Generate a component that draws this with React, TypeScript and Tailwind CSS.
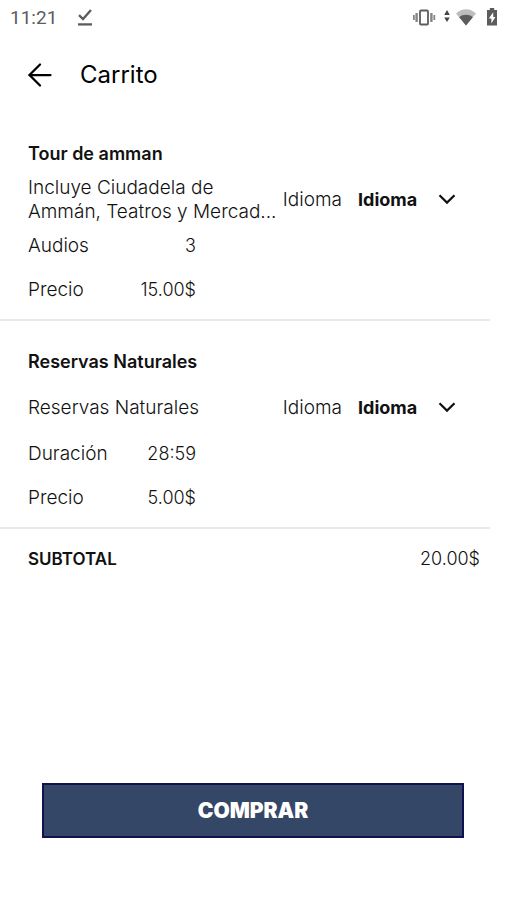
import { ArrowLeft } from 'lucide-react';

type CartItem = {
  id: string;
  title: string;
  description: string;
  details: { label: string; value: string }[];
};

const items: CartItem[] = [
  {
    id: 'amman',
    title: 'Tour de amman',
    description: 'Incluye Ciudadela de Ammán, Teatros y Mercad...',
    details: [
      { label: 'Audios', value: '3' },
      { label: 'Precio', value: '15.00$' },
    ],
  },
  {
    id: 'reservas',
    title: 'Reservas Naturales',
    description: 'Reservas Naturales',
    details: [
      { label: 'Duración', value: '28:59' },
      { label: 'Precio', value: '5.00$' },
    ],
  },
];

function StatusBar() {
  return (
    <div className="flex h-9 items-center pl-[10px] pr-2 text-[#5c5c5c]">
      <span className="font-['Roboto',sans-serif] text-[19px] font-normal leading-6">11:21</span>
      <svg className="ml-5 h-5 w-4" viewBox="0 0 16 20" fill="none" stroke="currentColor" strokeWidth="2.3">
        <path d="M2 7.2 6 11 14 2" />
        <path d="M1 16.4h14" />
      </svg>

      <div className="ml-auto flex items-center">
        {/* Vibrate */}
        <svg className="h-5 w-6" viewBox="0 0 24 20" fill="none" stroke="currentColor">
          <rect x="7" y="2.5" width="8" height="14" rx="1" strokeWidth="1.8" />
          <path d="M3.6 5v9M18.4 5v9" strokeWidth="2.4" opacity="0.75" />
          <path d="M.9 7v5M21.3 7v5" strokeWidth="1.8" opacity="0.75" />
        </svg>
        {/* Data arrows */}
        <svg className="ml-[6px] h-5 w-2" viewBox="0 0 8 20" fill="#444">
          <path d="M4 2 6.8 7H1.2zM4 14 1.2 9.4h5.6z" />
        </svg>
        {/* Wifi */}
        <svg className="ml-1 h-5 w-[22px]" viewBox="0 0 22 20">
          <path d="M1 5.5C7-.2 15-.2 21 5.5L11 17.5z" fill="#bdbdbd" />
          <path d="M4.2 9.2C8 6 14 6 17.8 9.2L11 17.5z" fill="#5c5c5c" />
        </svg>
        {/* Battery */}
        <svg className="ml-[9px] h-5 w-3" viewBox="0 0 12 20">
          <path d="M3.8 0h4.4v2H11v15.5H1V2h2.8z" fill="#5c5c5c" />
          <path d="M7.2 4.2 2.8 10.6h2.6v4.8l4-6.4H7.2z" fill="#fff" />
        </svg>
      </div>
    </div>
  );
}

function CartRow({ item }: { item: CartItem }) {
  const selectId = `idioma-${item.id}`;

  return (
    <li className="mr-4 border-b-2 border-[#e9e9e9] pb-[17px] pl-7 pt-[29px]">
      <h2 className="text-[18px] font-semibold leading-6">{item.title}</h2>

      <div className="mt-[10px] flex h-12 items-center pr-[34px] text-[19px]">
        <p className="min-w-0 flex-1">{item.description}</p>
        <label htmlFor={selectId}>Idioma</label>
        <div className="relative ml-4 w-[98px]">
          <select id={selectId} className="w-full appearance-none bg-transparent text-[18px] font-bold leading-6 outline-none">
            <option>Idioma</option>
          </select>
          <svg
            className="pointer-events-none absolute right-0 top-1 h-4 w-[18px]"
            viewBox="0 0 18 16"
            fill="none"
            stroke="currentColor"
            strokeWidth="2.2"
          >
            <path d="M1.5 3.2 9 10.6l7.5-7.4" />
          </svg>
        </div>
      </div>

      <dl className="mt-[10px] flex w-[168px] flex-col gap-5">
        {item.details.map((d) => (
          <div key={d.label} className="flex justify-between">
            <dt className="text-[19px]">{d.label}</dt>
            <dd>{d.value}</dd>
          </div>
        ))}
      </dl>
    </li>
  );
}

export default function App() {
  return (
    <div className="flex min-h-screen flex-col bg-white font-['Inter',sans-serif] text-[18px] font-light leading-6 text-[#111]">
      <StatusBar />

      <header className="flex h-[77px] items-center px-7">
        <button type="button" aria-label="Volver" className="text-black">
          <ArrowLeft className="h-6 w-6" viewBox="4 4 16 16" strokeWidth={1.5} />
        </button>
        <h1 className="ml-7 text-[24px] font-normal leading-8 text-black">Carrito</h1>
      </header>

      <main className="flex flex-1 flex-col">
        <ul>
          {items.map((item) => (
            <CartRow key={item.id} item={item} />
          ))}
        </ul>

        <div className="flex justify-between pl-7 pr-[26px] pt-[18px]">
          <span className="text-[17px] font-semibold">SUBTOTAL</span>
          <span>20.00$</span>
        </div>

        <div className="mt-auto px-[42px] pb-[62px]">
          <button
            type="button"
            className="h-[55px] w-full border-2 border-[#0f1150] bg-[#344767] text-[21px] font-black text-white"
          >
            COMPRAR
          </button>
        </div>
      </main>
    </div>
  );
}
